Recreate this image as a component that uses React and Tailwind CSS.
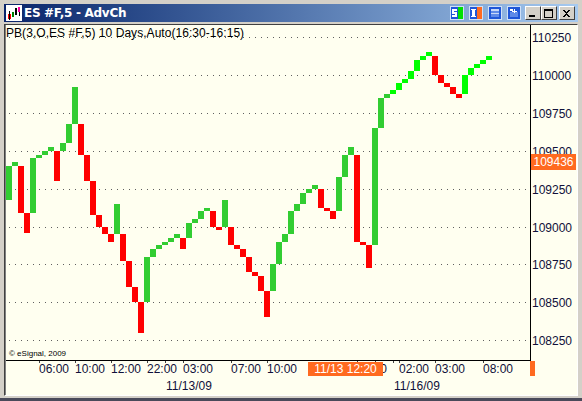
import React from 'react';

const G = '#32cd32';
const L = '#00ff00';
const R = '#ff0000';

// [x, top, bottom, colour]
const bars = [
  [6, 166, 200, G], [12, 162, 166, G], [18, 166, 213, R], [24, 213, 233, R], [30, 158, 213, G],
  [36, 155, 158, G], [42, 151, 155, G], [48, 147, 151, G], [54, 151, 181, R], [60, 143, 151, G],
  [66, 124, 143, G], [72, 87, 124, G], [78, 124, 155, R], [84, 155, 181, R], [90, 181, 215, R],
  [96, 215, 227, R], [102, 227, 234, R], [108, 234, 242, R], [114, 204, 234, G], [120, 234, 261, R],
  [126, 261, 287, R], [132, 287, 302, R], [138, 302, 333, R], [144, 257, 302, G], [150, 249, 257, G],
  [156, 245, 249, G], [162, 242, 245, G], [168, 238, 242, G], [174, 234, 238, G], [180, 238, 249, R],
  [186, 223, 238, G], [192, 219, 223, G], [198, 211, 219, G], [204, 208, 211, G], [210, 211, 227, R],
  [216, 227, 230, R], [222, 200, 227, G], [228, 227, 245, R], [234, 245, 249, R], [240, 249, 257, R],
  [246, 257, 272, R], [252, 272, 276, R], [258, 276, 291, R], [264, 291, 317, R], [270, 264, 291, G],
  [276, 242, 264, G], [282, 234, 242, G], [288, 211, 234, G], [294, 204, 211, G], [300, 193, 204, G],
  [306, 189, 193, G], [312, 185, 189, G], [318, 189, 208, R], [324, 208, 211, R], [330, 211, 219, R],
  [336, 177, 211, G], [342, 155, 177, G], [348, 147, 155, G], [354, 155, 242, R], [360, 242, 245, R],
  [366, 245, 268, R], [372, 128, 245, G], [378, 98, 128, G], [384, 94, 98, G], [390, 90, 94, L],
  [396, 83, 90, L], [402, 79, 83, L], [408, 71, 79, L], [414, 60, 71, L], [420, 56, 60, L],
  [426, 52, 56, L], [432, 56, 75, R], [438, 75, 83, R], [444, 83, 87, R], [450, 87, 94, R],
  [456, 94, 98, R], [462, 75, 94, L], [468, 68, 75, L], [474, 64, 68, L], [480, 60, 64, L],
  [486, 56, 60, L],
];

const prices = [
  [37, '110250'], [75, '110000'], [113, '109750'], [151, '109500'], [189, '109250'],
  [227, '109000'], [264, '108750'], [302, '108500'], [340, '108250'],
];

const times = [
  [39, '06:00'], [75, '10:00'], [111, '12:00'], [147, '22:00'], [183, '03:00'],
  [231, '07:00'], [267, '10:00'], [357, '10:00'], [399, '02:00'], [435, '03:00'], [483, '08:00'],
];

const ticks = [39, 75, 111, 147, 165, 183, 231, 267, 357, 375, 393, 399, 435, 483];

const dots = [];
for (const [y] of prices) {
  for (let x = 9; x < 529; x += 6) dots.push([x, y]);
}

function AppIcon() {
  return (
    <svg width="16" height="16" viewBox="0 0 16 16" shapeRendering="crispEdges" className="shrink-0">
      <rect width="16" height="16" fill="#ffffff" />
      <rect x="2" y="9" width="3" height="5" fill="#ff0000" />
      <rect x="3" y="6" width="1" height="9" fill="#000000" />
      <rect x="6" y="7" width="2" height="5" fill="#008000" />
      <rect x="9" y="3" width="2" height="7" fill="#000000" />
      <rect x="12" y="2" width="2" height="5" fill="#ff00a0" />
      <rect x="13" y="7" width="1" height="4" fill="#000000" />
    </svg>
  );
}

function ToolIcon({ children }) {
  return (
    <svg width="14" height="14" viewBox="0 0 14 14" shapeRendering="crispEdges" className="shrink-0">
      <rect width="14" height="14" fill="#cfe0f7" />
      {children}
    </svg>
  );
}

function WinButton({ children }) {
  return (
    <div className="w-4 h-[14px] bg-[#d4d0c8] border border-t-white border-l-white border-r-[#404040] border-b-[#404040] flex items-center justify-center shrink-0">
      <svg width="10" height="9" viewBox="0 0 10 9" shapeRendering="crispEdges">{children}</svg>
    </div>
  );
}

function TitleBar() {
  return (
    <div className="h-[18px] flex items-center bg-gradient-to-r from-[#0a246a] to-[#a6caf0] pl-[2px] pr-[3px] shrink-0">
      <AppIcon />
      <span className="ml-[2px] text-white font-bold text-[12px] tracking-[-0.3px] leading-none font-['DejaVu_Sans',sans-serif] whitespace-nowrap">ES #F,5 - AdvCh</span>
      <div className="flex-1"></div>
      <div className="flex items-center gap-[5px] mr-[4px]">
        <ToolIcon>
          <rect x="1" y="1" width="7" height="12" fill="#1f56d8" />
          <rect x="8" y="1" width="5" height="12" fill="#00e000" />
          <rect x="2" y="3" width="5" height="2" fill="#ffffff" />
          <rect x="2" y="3" width="2" height="4" fill="#ffffff" />
          <rect x="2" y="6" width="5" height="2" fill="#ffffff" />
          <rect x="5" y="6" width="2" height="5" fill="#ffffff" />
          <rect x="2" y="9" width="5" height="2" fill="#ffffff" />
        </ToolIcon>
        <ToolIcon>
          <rect x="1" y="1" width="7" height="12" fill="#1f56d8" />
          <rect x="8" y="1" width="5" height="12" fill="#ff6a20" />
          <rect x="2" y="3" width="5" height="1" fill="#ffffff" />
          <rect x="3" y="3" width="3" height="8" fill="#ffffff" />
          <rect x="2" y="10" width="5" height="1" fill="#ffffff" />
        </ToolIcon>
        <ToolIcon>
          <rect x="1" y="1" width="12" height="12" fill="#1f56d8" />
          <rect x="3" y="3" width="8" height="8" fill="#5f8ae8" />
          <rect x="3" y="3" width="8" height="2" fill="#c8d8f8" />
          <rect x="3" y="7" width="8" height="1" fill="#c8d8f8" />
        </ToolIcon>
        <ToolIcon>
          <rect x="1" y="1" width="12" height="12" fill="#1f56d8" />
          <rect x="3" y="3" width="3" height="2" fill="#ffffff" />
          <rect x="3" y="6" width="8" height="5" fill="#5f8ae8" />
          <rect x="5" y="5" width="5" height="1" fill="#ffffff" />
          <rect x="7" y="3" width="1" height="4" fill="#ffffff" />
        </ToolIcon>
      </div>
      <div className="flex items-center">
        <WinButton><rect x="1" y="6" width="6" height="2" fill="#000000" /></WinButton>
        <WinButton>
          <rect x="0" y="0" width="9" height="2" fill="#000000" />
          <rect x="0" y="0" width="1" height="9" fill="#000000" />
          <rect x="8" y="0" width="1" height="9" fill="#000000" />
          <rect x="0" y="8" width="9" height="1" fill="#000000" />
        </WinButton>
        <div className="ml-[2px]">
          <WinButton>
            <path d="M1 1h2v1h1v1h1v-1h1v-1h2v1h-1v1h-1v1h-1v1h1v1h1v1h1v1h-2v-1h-1v-1h-1v1h-1v1h-2v-1h1v-1h1v-1h1v-1h-1v-1h-1v-1h-1z" fill="#000000" />
          </WinButton>
        </div>
      </div>
    </div>
  );
}

function Chart() {
  return (
    <div className="relative h-[336px] border-b border-black">
      <svg width="524" height="335" viewBox="6 25 524 335" shapeRendering="crispEdges" className="block">
        {dots.map(([x, y]) => (
          <rect key={`${x}-${y}`} x={x} y={y} width="1" height="1" fill="#606060" />
        ))}
        {bars.map(([x, top, bottom, fill]) => (
          <rect key={x} x={x} y={top} width="6" height={bottom - top} fill={fill} />
        ))}
      </svg>
      <div className="absolute left-0 top-[1px] text-[12px] tracking-[0.05px] leading-[15px] text-black whitespace-nowrap">PB(3,O,ES #F,5) 10 Days,Auto(16:30-16:15)</div>
      <div className="absolute left-[3px] top-[324px] text-[8px] leading-[10px] text-black whitespace-nowrap">© eSignal, 2009</div>
    </div>
  );
}

function PriceAxis() {
  return (
    <div className="relative w-[48px] h-[336px] border-l border-black">
      {prices.map(([y, label]) => (
        <div key={label} className="absolute left-[1px] text-[12px] leading-[14px] text-[#10103a]" style={{ top: y - 25 - 6 }}>
          {label}
        </div>
      ))}
      <div className="absolute left-0 top-[129px] w-[45px] h-[16px] bg-[#ff6a20] text-white text-[12px] leading-[16px] text-center">109436</div>
    </div>
  );
}

function TimeAxis() {
  return (
    <div className="relative h-[32px]">
      {ticks.map((x) => (
        <div key={x} className="absolute top-0 w-px h-[2px] bg-[#404040]" style={{ left: x - 6 }}></div>
      ))}
      {times.map(([x, label]) => (
        <div key={x} className="absolute top-[1px] text-[12px] leading-[14px] text-[#10103a]" style={{ left: x - 6 }}>
          {label}
        </div>
      ))}
      <div className="absolute top-[18px] left-[160px] text-[12px] leading-[14px] text-[#10103a]">11/13/09</div>
      <div className="absolute top-[18px] left-[388px] text-[12px] leading-[14px] text-[#10103a]">11/16/09</div>
      <div className="absolute top-[1px] left-[302px] w-[75px] h-[14px] bg-[#ff6a20] text-white text-[12px] leading-[14px] text-center">11/13 12:20</div>
      <div className="absolute top-0 left-[524px] w-[5px] h-[15px] bg-[#ff6a20]"></div>
    </div>
  );
}

export default function App() {
  return (
    <div className="w-[582px] h-[401px] bg-[#d4d0c8] flex flex-col overflow-hidden font-['Liberation_Sans',Arial,sans-serif]">
      <div className="flex-1 flex flex-col pt-[4px] px-[4px] border-b-[3px] border-b-[#4a4a5a]">
        <TitleBar />
        <div className="mt-[2px] flex-1 flex flex-col border-t border-l border-[#404040] border-b border-b-white border-r border-r-white mb-[2px]">
          <div className="flex-1 bg-[#fffff0] border-l border-[#808080]">
            <div className="flex">
              <div className="w-[524px]">
                <Chart />
              </div>
              <PriceAxis />
            </div>
            <TimeAxis />
          </div>
        </div>
      </div>
    </div>
  );
}
